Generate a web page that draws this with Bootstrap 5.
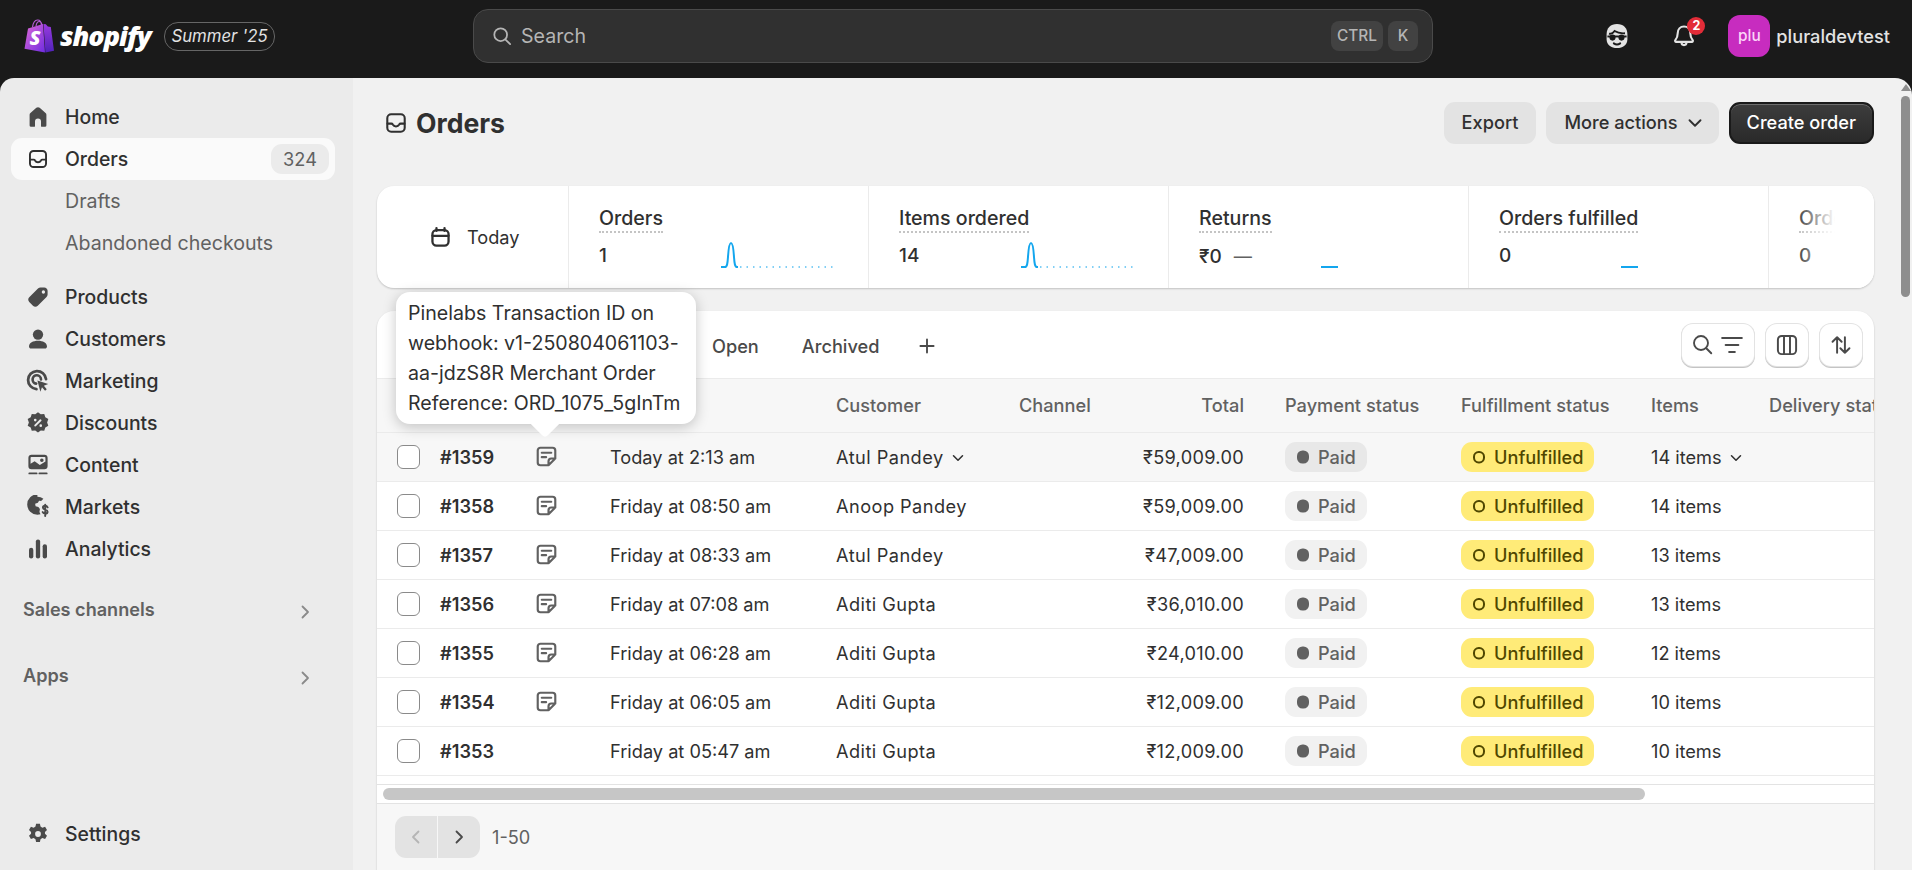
<!DOCTYPE html>
<html lang="en">
<head>
<meta charset="utf-8">
<title>Orders</title>
<link href="https://cdn.jsdelivr.net/npm/bootstrap@5.3.0/dist/css/bootstrap.min.css" rel="stylesheet">
<style>
html,body{height:870px;overflow:hidden}
body{background:#1a1a1a;font-family:Inter,"Liberation Sans",sans-serif;font-size:18.2px;color:#303030;font-weight:400;line-height:28px}
svg{display:block;flex:none}
.topbar{height:78px;background:#1a1a1a;padding:0 22px 6px 24px}
.bag{width:30px;height:34px}
.wordmark{font-family:"Open Sans",sans-serif;font-style:italic;font-weight:800;font-size:27px;letter-spacing:-1px;color:#fff;margin-left:6px;line-height:40px;width:91px}
.edition{height:29px;width:111px;margin-left:13px;border:1px solid #666;border-radius:14px;font-style:italic;font-size:16.8px;color:#e3e3e3;line-height:27px;text-align:center}
.search{position:relative;width:960px;height:54px;margin-left:198px;background:#303030;border:1px solid #4a4a4a;border-radius:15px;padding:0 14px 0 17px;color:#b5b5b5}
.search .ph{margin-left:8px;font-size:19.6px;color:#b5b5b5}
.kbd-key{height:30px;padding:0 6px;background:#424242;border-radius:8px;color:#b5b5b5;font-size:15.4px;font-weight:550;line-height:30px;min-width:30px;text-align:center}
.kbd-group{gap:5px}
.icon-btn{position:relative;color:#e3e3e3}
.notif{position:absolute;top:-5px;left:17px;width:18px;height:18px;border-radius:50%;background:#e22c38;color:#fff;font-size:12.5px;font-weight:700;line-height:18px;text-align:center}
.avatar{width:42px;height:42px;border-radius:12px;background:#c72cbf;color:#fbd5f8;font-size:15.4px;font-weight:500;line-height:42px;text-align:center}
.store{color:#e3e3e3;font-weight:550;margin-left:6px}
.shell{height:792px}
.side{width:353px;flex:none;background:#ebebeb;border-top-left-radius:14px;padding:18px 0 15px 11px;height:100%}
.nav-row{display:flex;align-items:center;height:42px;width:324px;padding-left:15px;border-radius:11px;color:#303030;font-size:19.4px;font-weight:500;text-decoration:none;gap:15px}
.nav-row svg{width:24px;height:24px;color:#4a4a4a}
.nav-row.active{background:#fafafa;position:relative}
.nav-row.sub{padding-left:54px;color:#616161;font-weight:400;font-size:19.6px}
.count{margin-left:auto;margin-right:6px;width:58px;height:30px;line-height:30px;border-radius:11px;background:#ebebeb;color:#616161;text-align:center;font-weight:400;font-size:18.2px}
.group-gap{margin-top:12px}
.section{display:flex;align-items:center;justify-content:space-between;padding-left:12px;width:304px;color:#616161;font-weight:600;font-size:18.1px;height:28px}
.section svg{color:#8a8a8a;width:20px;height:20px;margin-top:6px}
.main{flex:1;min-width:0;position:relative;background:#f1f1f1;border-top-right-radius:17px;padding:24px 38px 0 24px;overflow:hidden;height:100%}
.page-title{font-size:26.6px;font-weight:650;line-height:42px;color:#303030;gap:7px}
.act{height:42px;border:0;border-radius:11px;background:#e3e3e3;color:#303030;font-size:18.2px;font-weight:550;padding:0 18px;display:flex;align-items:center;gap:6px}
.act.more{padding-right:13px}
.act:hover{background:#e3e3e3;color:#303030}
.act.dark{background:linear-gradient(#3d3d3d,#2a2a2a);color:#fff;border:2px solid #1a1a1a;box-shadow:inset 0 1px 0 rgba(255,255,255,.25);padding:0 16px}
.act.dark:hover{color:#fff}
.panel{background:#fff;border:0;border-radius:17px;box-shadow:0 1px 2px rgba(0,0,0,.2)}
.stats{height:102px;margin-top:42px;overflow:hidden;position:relative}
.today{width:192px;flex:none;gap:15px;padding-left:52px;border-right:1px solid #ebebeb}
.metric{width:300px;flex:none;padding:18px 0 0 30px;border-right:1px solid #ebebeb;position:relative}
.metric:last-of-type{border-right:0}
.metric .lab{display:inline-block;font-size:19.6px;font-weight:500;line-height:26px;border-bottom:2px dotted #c4c4c4}
.metric .val{font-weight:500;line-height:28px;margin-top:9px;font-size:19px}
.metric .val small{font-size:18.2px;color:#616161;margin-left:12px;font-weight:400}
.metric svg{position:absolute;left:151px;top:56px}
.edge-fade{position:absolute;top:0;bottom:0;right:0;width:75px;background:linear-gradient(90deg,rgba(255,255,255,0),#fff 36px)}
.list{margin-top:23px;position:relative}
.tabs{height:68px;padding:0 12px 0 0;border-bottom:1px solid #ebebeb}
.tab-row{padding:2px 0 0 335px;gap:43px;color:#4a4a4a;font-weight:550}
.tool{height:42px;border-radius:11px;background:#fff;box-shadow:0 0 0 1px #e3e3e3,0 1px 0 1px #c4c4c4;display:flex;align-items:center;justify-content:center;color:#4a4a4a;width:42px;padding:0}
.tool.wide{width:72px;gap:3px}
.scroller{height:406px;overflow:hidden;border-bottom:1px solid #e3e3e3}
.orders{table-layout:fixed;width:1640px;margin:0;--bs-table-bg:transparent;--bs-table-color:#303030}
.orders th,.orders td{height:49px;padding:0 10px;vertical-align:middle;border-bottom:1px solid #ebebeb;font-size:18.2px;white-space:nowrap;font-weight:400}
.orders th{height:53px;background:#f7f7f7;color:#616161;font-weight:500}
.orders tr.hover td{background:#f7f7f7}
.orders td.no{font-weight:600}
.orders .who{letter-spacing:.45px}
.orders .tot{text-align:right;padding-right:31px}
.orders td.tot{letter-spacing:.3px}
.check{display:block;width:23px;height:24px;margin:0 0 0 10px;border:1px solid #8a8a8a;border-radius:6px;background:#fff;box-shadow:none}
.note{width:27px;height:27px;color:#616161;margin-left:-2px}
.pill{display:inline-flex;align-items:center;height:30px;border-radius:11px;padding:0 11px;gap:8px;font-size:18.2px;font-weight:500;line-height:30px}
.pill.paid{background:#f1f1f1;color:#616161}
tr.hover .pill.paid{background:#e8e8e8}
.pill.unf{background:#ffeb78;color:#4f4700}
.chev{display:inline-block;vertical-align:-3px;margin-left:5px}
.hscroll{height:19px;padding:3px 6px 0 6px;border-bottom:1px solid #e3e3e3;background:#fff}
.hscroll div{height:12px;width:1262px;background:#c6c6c6;border-radius:6px}
.foot{background:#f7f7f7;padding:12px 18px 30px;gap:12px;border-radius:0 0 17px 17px;color:#616161}
.pager{gap:1px}
.pager span{width:42px;height:42px;background:#e3e3e3;display:flex;align-items:center;justify-content:center;color:#4a4a4a}
.pager span:first-child{border-radius:11px 0 0 11px;color:#b5b5b5}
.pager span:last-child{border-radius:0 11px 11px 0}
.tip{position:absolute;left:19px;top:-19px;width:300px;height:132px;padding:6px 12px;background:#fff;border-radius:14px;line-height:30px;box-shadow:0 3px 14px rgba(0,0,0,.22);color:#303030;z-index:5;font-size:19.6px}
.tip:after{content:"";position:absolute;left:139px;bottom:-10px;width:20px;height:20px;background:#fff;transform:rotate(45deg);border-radius:0 0 4px 0}
.sb{position:absolute;right:2px;top:18px;width:9px;height:201px;background:#8e8e8e;border-radius:5px}
.sb-up{position:absolute;right:1px;top:6px;width:0;height:0;border:5.5px solid transparent;border-top:0;border-bottom:7px solid #8e8e8e}
</style>
</head>
<body>
<svg width="0" height="0" style="position:absolute">
  <symbol id="i-note" viewBox="0 0 20 20"><path fill="none" stroke="currentColor" stroke-width="1.6" stroke-linejoin="round" stroke-linecap="round" d="M16.5 11.5V5.5a2 2 0 0 0-2-2h-9a2 2 0 0 0-2 2v9a2 2 0 0 0 2 2h6zM11.5 16.5v-3a2 2 0 0 1 2-2h3M6.5 7.2h7M6.5 10.5h3.2"/></symbol>
  <symbol id="i-chev" viewBox="0 0 20 20"><path fill="none" stroke="currentColor" stroke-width="1.7" stroke-linecap="round" stroke-linejoin="round" d="M5 7.500l5 5 5-5"/></symbol>
  <symbol id="i-right" viewBox="0 0 20 20"><path fill="none" stroke="currentColor" stroke-width="1.8" stroke-linecap="round" stroke-linejoin="round" d="M7.500 4.500L13 10l-5.500 5.500"/></symbol>
  <symbol id="i-inbox" viewBox="0 0 20 20"><rect x="3.300" y="3.300" width="13.400" height="13.400" rx="3" fill="none" stroke="currentColor" stroke-width="1.600"/><path fill="none" stroke="currentColor" stroke-width="1.600" stroke-linecap="round" d="M3.500 10.500h2.900c.5 0 .9.300 1.100.700.500.900 1.400 1.500 2.500 1.500s2-.6 2.500-1.500c.2-.4.600-.7 1.100-.7h2.900"/></symbol>
  <symbol id="i-paid" viewBox="0 0 14 14"><rect x="1" y="0.500" width="12" height="13" rx="5.500" fill="currentColor"/></symbol>
  <symbol id="i-ring" viewBox="0 0 14 14"><rect x="2" y="2" width="10" height="10.500" rx="4.700" fill="none" stroke="currentColor" stroke-width="2"/></symbol>
</svg>

<header class="topbar d-flex align-items-center">
  <svg class="bag" viewBox="0 0 30 34" aria-hidden="true">
    <defs><linearGradient id="bg1" x1="0" y1="0" x2="1" y2="1"><stop offset="0" stop-color="#e06ad8"/><stop offset="1" stop-color="#6f2be0"/></linearGradient><linearGradient id="bg2" x1="0" y1="0" x2="0" y2="1"><stop offset="0" stop-color="#9a3be0"/><stop offset="1" stop-color="#4f22b8"/></linearGradient></defs>
    <path d="M8.500 8c.6-4 2.800-6.800 5-7 2.500-.2 3.700 2 4 5M12 7c.5-2.800 2-4.600 3.500-4.500 1.500.2 2.200 1.500 2.500 3.800" fill="none" stroke="#b45bd6" stroke-width="1.200"/>
    <path d="M4 9.500 19 5l2 28.500L.5 29.800z" fill="url(#bg1)"/><path d="M19.500 5l2.300.3 2 2.200 3 .4L30 31.700l-8.600 1.800z" fill="url(#bg2)"/>
    <text x="5.500" y="26" font-family="Open Sans" font-weight="800" font-style="italic" font-size="20" fill="#fff">S</text>
  </svg>
  <span class="wordmark">shopify</span>
  <span class="edition">Summer '25</span>
  <div class="search d-flex align-items-center">
    <svg width="22" height="22" viewBox="0 0 20 20"><circle cx="8.800" cy="8.800" r="5.800" fill="none" stroke="currentColor" stroke-width="1.600"/><path d="M13.200 13.200l4.200 4.200" stroke="currentColor" stroke-width="1.600" stroke-linecap="round"/></svg>
    <span class="ph">Search</span>
    <span class="ms-auto d-flex kbd-group"><span class="kbd-key">CTRL</span><span class="kbd-key">K</span></span>
  </div>
  <div class="ms-auto d-flex align-items-center">
    <span class="icon-btn"><svg width="32" height="32" viewBox="0 0 20 20"><path d="M10 2.500c4 0 6.500 2.300 6.500 6.500v3c0 3.500-2.800 5.500-6.500 5.500S3.500 15.500 3.500 12V9c0-4.200 2.500-6.500 6.500-6.500z" fill="#e3e3e3"/><path d="M5 8.500c1.500.5 2.500-.2 3.500-1.600 1.500 1 4 1.600 6.500 1.400" fill="none" stroke="#1a1a1a" stroke-width="1.200"/><circle cx="7.200" cy="11" r="1.900" fill="#1a1a1a"/><circle cx="12.800" cy="11" r="1.900" fill="#1a1a1a"/><path d="M4 10.300h12" stroke="#1a1a1a" stroke-width="1.200"/><path d="M8 14.600c1.200.8 2.800.8 4 0" fill="none" stroke="#1a1a1a" stroke-width="1.200" stroke-linecap="round"/></svg></span>
    <span class="icon-btn" style="margin-left:37px"><svg width="28" height="28" viewBox="0 0 20 20"><path d="M10 3.200c-2.700 0-4.500 2.100-4.500 4.800 0 2.600-.8 3.900-1.700 5-.4.500-.1 1.200.6 1.200h11.200c.7 0 1-.7.6-1.200-.9-1.100-1.700-2.400-1.700-5 0-2.700-1.800-4.800-4.500-4.800z" fill="none" stroke="currentColor" stroke-width="1.500" stroke-linejoin="round"/><path d="M8.200 14.500c0 1.100.8 2 1.800 2s1.800-.9 1.800-2" fill="none" stroke="currentColor" stroke-width="1.500"/></svg><span class="notif">2</span></span>
    <span class="avatar" style="margin-left:30px">plu</span>
    <span class="store">pluraldevtest</span>
  </div>
</header>

<div class="shell d-flex">
  <nav class="side d-flex flex-column">
    <a class="nav-row"><svg viewBox="0 0 20 20"><path fill="currentColor" d="M10 1.800c.5 0 1 .2 1.400.5l4.900 4.300c.5.400.7 1 .7 1.600V17a1.200 1.200 0 0 1-1.200 1.200h-2.600a.7.700 0 0 1-.7-.7v-3.800a2.500 2.500 0 0 0-5 0v3.800a.7.700 0 0 1-.7.700H4.200A1.200 1.200 0 0 1 3 17V8.200c0-.6.200-1.200.7-1.600l4.900-4.300c.4-.3.900-.5 1.400-.5z"/></svg>Home</a>
    <a class="nav-row active"><svg style="color:#303030"><use href="#i-inbox"/></svg>Orders<span class="count">324</span></a>
    <a class="nav-row sub">Drafts</a>
    <a class="nav-row sub">Abandoned checkouts</a>
    <div class="group-gap"></div>
    <a class="nav-row"><svg viewBox="0 0 20 20"><path fill="currentColor" fill-rule="evenodd" d="M2.700 10.300 10 2.900c.6-.6 1.300-.9 2.100-.9h3.100c1.500 0 2.800 1.300 2.800 2.800v3.100c0 .8-.3 1.500-.9 2.100l-7.300 7.300c-1.100 1.100-2.900 1.100-4 0l-3.100-3.100c-1.100-1.100-1.100-2.900 0-3.900zM14.500 7.200a1.400 1.400 0 1 0 0-2.800 1.400 1.400 0 0 0 0 2.800z"/></svg>Products</a>
    <a class="nav-row"><svg viewBox="0 0 20 20"><circle cx="10" cy="6.300" r="4.300" fill="currentColor"/><path fill="currentColor" d="M2.500 16.300c0-3.100 3.400-4.800 7.500-4.800s7.500 1.700 7.500 4.800c0 1-.8 1.700-1.700 1.700H4.200c-.9 0-1.700-.7-1.700-1.700z"/></svg>Customers</a>
    <a class="nav-row"><svg viewBox="0 0 20 20"><path fill="none" stroke="currentColor" stroke-width="2.300" stroke-linecap="round" d="M8.700 16.700a7.500 7.500 0 1 1 8-8.300"/><path fill="none" stroke="currentColor" stroke-width="2.200" stroke-linecap="round" d="M8.500 12.200a3.500 3.500 0 1 1 4-3.500"/><path fill="currentColor" d="M9.500 9.500l9 3-3.600 1.500 2.400 2.800-1.400 1.300-2.600-2.900-1.300 3.800z"/></svg>Marketing</a>
    <a class="nav-row"><svg viewBox="0 0 20 20"><path fill="currentColor" fill-rule="evenodd" d="M10 1l2.300 1.800 2.900-.3.900 2.700 2.500 1.500-1 2.800 1 2.800-2.500 1.500-.9 2.700-2.900-.3L10 18l-2.300-1.800-2.900.3-.9-2.700-2.500-1.500 1-2.800-1-2.800 2.500-1.500.9-2.700 2.900.3zM12.700 7.200a.8.800 0 0 0-1.200-.1l-4.500 4.500a.9.900 0 0 0 1.200 1.200l4.500-4.500a.8.800 0 0 0 0-1.100zM7.700 8.700a1.100 1.100 0 1 0 0-2.200 1.100 1.100 0 0 0 0 2.200zm4.600 4.600a1.100 1.100 0 1 0 0-2.200 1.100 1.100 0 0 0 0 2.200z"/></svg>Discounts</a>
    <a class="nav-row"><svg viewBox="0 0 20 20"><path fill="currentColor" fill-rule="evenodd" d="M4.500 1.500h11c1.400 0 2.500 1.100 2.500 2.500v7c0 1.400-1.100 2.500-2.500 2.500h-11A2.500 2.500 0 0 1 2 11V4c0-1.400 1.100-2.500 2.500-2.500zm0 1.800a.7.700 0 0 0-.7.700v5l3.400-2.200 4.300 3.300 4.700-3V4a.7.700 0 0 0-.7-.7zm8.700 4.200a1.500 1.500 0 1 0 0-3 1.500 1.500 0 0 0 0 3z"/><path stroke="currentColor" stroke-width="1.600" stroke-linecap="round" d="M2.800 17h6M11.200 17h6"/></svg>Content</a>
    <a class="nav-row"><svg viewBox="0 0 20 20"><path fill="currentColor" d="M9.500 1.500c1.900 0 3.600.6 5 1.700l-1.900 1.900-1.700-.3-1 1.700-2.300.8.400 2 2.300.6 1.300 1.800-.4 2.400.9 1.900c-.8.200-1.700.4-2.600.4a8.500 8.500 0 0 1 0-17z"/><path fill="none" stroke="currentColor" stroke-width="1.600" stroke-linecap="round" d="M18 10.300c-.4-.9-1.100-1.300-2-1.300-1.100 0-1.900.6-1.900 1.500 0 2.200 3.900 1.200 3.900 3.400 0 1-.9 1.600-2 1.600-.9 0-1.700-.4-2.100-1.300M16 8v9.500"/></svg>Markets</a>
    <a class="nav-row"><svg viewBox="0 0 20 20"><rect x="2.500" y="9" width="3.600" height="9" rx="1.800" fill="currentColor"/><rect x="8.200" y="2" width="3.600" height="16" rx="1.800" fill="currentColor"/><rect x="13.900" y="6" width="3.600" height="12" rx="1.800" fill="currentColor"/></svg>Analytics</a>
    <div class="section" style="margin-top:25px">Sales channels<svg><use href="#i-right"/></svg></div>
    <div class="section" style="margin-top:38px">Apps<svg><use href="#i-right"/></svg></div>
    <a class="nav-row mt-auto"><svg viewBox="0 0 20 20"><path fill="currentColor" fill-rule="evenodd" d="M8.400 1.500h3.200l.5 2.300 1.500.9 2.300-.7 1.600 2.700-1.700 1.600v1.500l1.700 1.600-1.600 2.700-2.300-.7-1.500.9-.5 2.300H8.400l-.5-2.300-1.500-.9-2.300.7-1.600-2.700 1.700-1.600V8.300L2.500 6.700l1.600-2.700 2.300.7 1.500-.9zM10 12.400a2.400 2.400 0 1 0 0-4.800 2.400 2.400 0 0 0 0 4.800z"/></svg>Settings</a>
  </nav>

  <main class="main">
    <div class="d-flex align-items-center justify-content-between">
      <h1 class="page-title d-flex align-items-center m-0"><svg width="26" height="26" style="margin-left:6px"><use href="#i-inbox"/></svg>Orders</h1>
      <div class="d-flex" style="gap:10px">
        <button class="btn act">Export</button>
        <button class="btn act more">More actions<svg width="22" height="22"><use href="#i-chev"/></svg></button>
        <button class="btn act dark">Create order</button>
      </div>
    </div>

    <section class="panel stats d-flex">
      <div class="today d-flex align-items-center"><svg width="23" height="23" viewBox="0 0 20 20"><rect x="3" y="3.500" width="14" height="13.500" rx="3.500" fill="none" stroke="currentColor" stroke-width="2"/><path d="M3 8.500h14M6.500 1.800v2.500M13.500 1.800v2.500" stroke="currentColor" stroke-width="2" stroke-linecap="round"/></svg>Today</div>
      <div class="metric"><span class="lab">Orders</span><div class="val">1</div>
        <svg width="116" height="30" viewBox="0 0 116 30"><path d="M1 25h4c2 0 2.500-3 3-10 .5-8 1.500-14 3-14s2.500 6 3 14c.5 7 1 10 3 10h1" fill="none" stroke="#13a6ee" stroke-width="2"/><path d="M20 25h95" stroke="#13a6ee" stroke-width="1.500" stroke-dasharray="1.500 5" opacity=".7"/></svg></div>
      <div class="metric"><span class="lab">Items ordered</span><div class="val">14</div>
        <svg width="116" height="30" viewBox="0 0 116 30"><path d="M1 25h4c2 0 2.500-3 3-10 .5-8 1.500-14 3-14s2.500 6 3 14c.5 7 1 10 3 10h1" fill="none" stroke="#13a6ee" stroke-width="2"/><path d="M20 25h95" stroke="#13a6ee" stroke-width="1.500" stroke-dasharray="1.500 5" opacity=".7"/></svg></div>
      <div class="metric"><span class="lab">Returns</span><div class="val">₹0<small>—</small></div>
        <svg width="116" height="30" viewBox="0 0 116 30"><path d="M1 25h17" stroke="#13a6ee" stroke-width="2"/></svg></div>
      <div class="metric"><span class="lab">Orders fulfilled</span><div class="val">0</div>
        <svg width="116" height="30" viewBox="0 0 116 30"><path d="M1 25h17" stroke="#13a6ee" stroke-width="2"/></svg></div>
      <div class="metric" style="color:#4a4a4a"><span class="lab">Orders</span><div class="val">0</div></div>
      <div class="edge-fade"></div>
    </section>

    <section class="panel list">
      <div class="tabs d-flex align-items-center justify-content-between">
        <div class="tab-row d-flex align-items-center"><span>Open</span><span>Archived</span><svg width="22" height="22" viewBox="0 0 20 20" style="margin-left:-6px"><path d="M10 4v12M4 10h12" stroke="currentColor" stroke-width="1.700" stroke-linecap="round"/></svg></div>
        <div class="d-flex" style="gap:12px">
          <button class="tool wide border-0"><svg width="25" height="25" viewBox="0 0 20 20"><circle cx="8.800" cy="8.800" r="5.600" fill="none" stroke="currentColor" stroke-width="1.500"/><path d="M13 13l4 4" stroke="currentColor" stroke-width="1.500" stroke-linecap="round"/></svg><svg width="28" height="28" viewBox="0 0 20 20"><path d="M3 5h14M5.500 10h9M8 15h4" stroke="currentColor" stroke-width="1.500" stroke-linecap="round"/></svg></button>
          <button class="tool border-0"><svg width="26" height="26" viewBox="0 0 20 20"><rect x="3" y="3" width="14" height="14" rx="3" fill="none" stroke="currentColor" stroke-width="1.500"/><path d="M7.700 3v14M12.300 3v14" stroke="currentColor" stroke-width="1.500"/></svg></button>
          <button class="tool border-0"><svg width="26" height="26" viewBox="0 0 20 20"><path d="M7 16V4M3.500 7.500 7 4l3.500 3.500M13 4v12M9.500 12.500 13 16l3.500-3.500" fill="none" stroke="currentColor" stroke-width="1.500" stroke-linecap="round" stroke-linejoin="round"/></svg></button>
        </div>
      </div>

      <div class="tip">Pinelabs Transaction ID on webhook: v1-250804061103-aa-jdzS8R Merchant Order Reference: ORD_1075_5gInTm</div>

      <div class="scroller">
        <table class="table orders">
          <colgroup><col style="width:53px"><col style="width:95px"><col style="width:75px"><col style="width:226px"><col style="width:183px"><col style="width:91px"><col style="width:175px"><col style="width:176px"><col style="width:190px"><col style="width:118px"><col style="width:258px"></colgroup>
          <thead><tr><th></th><th></th><th></th><th></th><th>Customer</th><th>Channel</th><th class="tot">Total</th><th>Payment status</th><th>Fulfillment status</th><th>Items</th><th>Delivery status</th></tr></thead>
          <tbody>
            <tr class="hover"><td><span class="check"></span></td><td class="no">#1359</td><td><svg class="note"><use href="#i-note"/></svg></td><td>Today at 2:13 am</td><td class="who">Atul Pandey<svg class="chev" width="18" height="18"><use href="#i-chev"/></svg></td><td></td><td class="tot">₹59,009.00</td><td><span class="pill paid"><svg width="14" height="14"><use href="#i-paid"/></svg>Paid</span></td><td><span class="pill unf"><svg width="14" height="14"><use href="#i-ring"/></svg>Unfulfilled</span></td><td>14 items<svg class="chev" width="18" height="18"><use href="#i-chev"/></svg></td><td></td></tr>
            <tr><td><span class="check"></span></td><td class="no">#1358</td><td><svg class="note"><use href="#i-note"/></svg></td><td>Friday at 08:50 am</td><td class="who">Anoop Pandey</td><td></td><td class="tot">₹59,009.00</td><td><span class="pill paid"><svg width="14" height="14"><use href="#i-paid"/></svg>Paid</span></td><td><span class="pill unf"><svg width="14" height="14"><use href="#i-ring"/></svg>Unfulfilled</span></td><td>14 items</td><td></td></tr>
            <tr><td><span class="check"></span></td><td class="no">#1357</td><td><svg class="note"><use href="#i-note"/></svg></td><td>Friday at 08:33 am</td><td class="who">Atul Pandey</td><td></td><td class="tot">₹47,009.00</td><td><span class="pill paid"><svg width="14" height="14"><use href="#i-paid"/></svg>Paid</span></td><td><span class="pill unf"><svg width="14" height="14"><use href="#i-ring"/></svg>Unfulfilled</span></td><td>13 items</td><td></td></tr>
            <tr><td><span class="check"></span></td><td class="no">#1356</td><td><svg class="note"><use href="#i-note"/></svg></td><td>Friday at 07:08 am</td><td class="who">Aditi Gupta</td><td></td><td class="tot">₹36,010.00</td><td><span class="pill paid"><svg width="14" height="14"><use href="#i-paid"/></svg>Paid</span></td><td><span class="pill unf"><svg width="14" height="14"><use href="#i-ring"/></svg>Unfulfilled</span></td><td>13 items</td><td></td></tr>
            <tr><td><span class="check"></span></td><td class="no">#1355</td><td><svg class="note"><use href="#i-note"/></svg></td><td>Friday at 06:28 am</td><td class="who">Aditi Gupta</td><td></td><td class="tot">₹24,010.00</td><td><span class="pill paid"><svg width="14" height="14"><use href="#i-paid"/></svg>Paid</span></td><td><span class="pill unf"><svg width="14" height="14"><use href="#i-ring"/></svg>Unfulfilled</span></td><td>12 items</td><td></td></tr>
            <tr><td><span class="check"></span></td><td class="no">#1354</td><td><svg class="note"><use href="#i-note"/></svg></td><td>Friday at 06:05 am</td><td class="who">Aditi Gupta</td><td></td><td class="tot">₹12,009.00</td><td><span class="pill paid"><svg width="14" height="14"><use href="#i-paid"/></svg>Paid</span></td><td><span class="pill unf"><svg width="14" height="14"><use href="#i-ring"/></svg>Unfulfilled</span></td><td>10 items</td><td></td></tr>
            <tr><td><span class="check"></span></td><td class="no">#1353</td><td></td><td>Friday at 05:47 am</td><td class="who">Aditi Gupta</td><td></td><td class="tot">₹12,009.00</td><td><span class="pill paid"><svg width="14" height="14"><use href="#i-paid"/></svg>Paid</span></td><td><span class="pill unf"><svg width="14" height="14"><use href="#i-ring"/></svg>Unfulfilled</span></td><td>10 items</td><td></td></tr>
          </tbody>
        </table>
      </div>
      <div class="hscroll"><div></div></div>
      <div class="foot d-flex align-items-center">
        <div class="pager d-flex"><span><svg width="20" height="20" style="transform:scaleX(-1)"><use href="#i-right"/></svg></span><span><svg width="20" height="20"><use href="#i-right"/></svg></span></div>
        <span>1-50</span>
      </div>
    </section>
    <span class="sb-up"></span><span class="sb"></span>
  </main>
</div>
<script src="https://cdn.jsdelivr.net/npm/bootstrap@5.3.0/dist/js/bootstrap.bundle.min.js"></script>
</body>
</html>
